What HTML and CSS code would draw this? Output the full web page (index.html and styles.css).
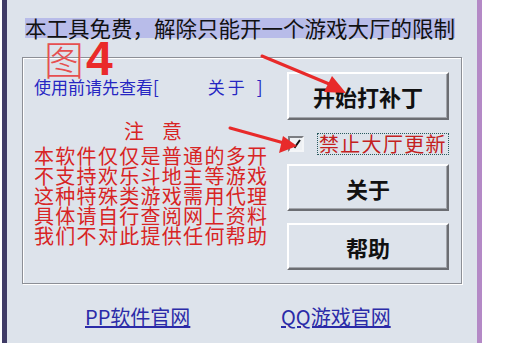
FILE: index.html
```html
<!DOCTYPE html>
<html lang="zh-CN">
<head>
<meta charset="utf-8">
<title>游戏大厅多开补丁</title>
<link rel="stylesheet" href="styles.css">
</head>
<body>
<div class="window">
  <div class="title"><span class="title-text">本工具免费，解除只能开一个游戏大厅的限制</span></div>
  <div class="group">
    <div class="left">
      <div class="hint">使用前请先查看[<span class="hint-about">关于</span>]</div>
      <div class="notice-head">注&nbsp;&nbsp;&nbsp;&nbsp;意</div>
      <div class="notice">
        <div class="notice-line">本软件仅仅是普通的多开</div>
        <div class="notice-line">不支持欢乐斗地主等游戏</div>
        <div class="notice-line">这种特殊类游戏需用代理</div>
        <div class="notice-line">具体请自行查阅网上资料</div>
        <div class="notice-line">我们不对此提供任何帮助</div>
      </div>
    </div>
    <div class="right">
      <div class="btn btn-main">开始打补丁</div>
      <div class="check-row">
        <span class="checkbox"><svg width="12" height="12" viewBox="0 0 12 12"><path d="M2 6 L5 9 L10 2" fill="none" stroke="#111" stroke-width="2"/></svg></span>
        <span class="check-label">禁止大厅更新</span>
      </div>
      <div class="btn btn-about">关于</div>
      <div class="btn btn-help">帮助</div>
    </div>
  </div>
  <div class="links">
    <a class="link" href="#">PP软件官网</a>
    <a class="link" href="#">QQ游戏官网</a>
  </div>
</div>
<div class="fig-label"><span class="fig-char">图</span><span class="fig-num">4</span></div>
<svg class="arrows" width="508" height="343" viewBox="0 0 508 343">
  <path d="M262 56 L334 86" stroke="#e82a2a" stroke-width="3" fill="none" stroke-linecap="round"/>
  <path d="M346 93 L324 92 L332 76 Z" fill="#e82a2a"/>
  <path d="M230 128 L284 143" stroke="#e82a2a" stroke-width="3" fill="none" stroke-linecap="round"/>
  <path d="M297 146 L279 153 L283 136 Z" fill="#e82a2a"/>
</svg>
</body>
</html>
```

FILE: styles.css
```css
html, body {
  margin: 0;
  padding: 0;
  background: #ffffff;
}
body {
  position: relative;
  width: 508px;
  height: 343px;
  overflow: hidden;
  font-family: "Noto Sans CJK SC", "Liberation Sans", sans-serif;
}
.window {
  margin-left: 2px;
  width: 470px;
  height: 343px;
  background: #dde3eb;
  border-left: 5px solid #3f3b66;
  border-right: 5px solid #b489c6;
  box-sizing: content-box;
  overflow: hidden;
}
.title {
  padding-top: 18px;
  padding-left: 18px;
  height: 20px;
}
.title-text {
  display: inline-block;
  height: 20px;
  line-height: 20px;
  font-size: 21.5px;
  color: #111;
  background: #b8bce9;
  white-space: nowrap;
}
.group {
  margin-top: 19px;
  margin-left: 15px;
  width: 438px;
  height: 225px;
  border: 1px solid #8c8f96;
  box-shadow: 1px 1px 0 #ffffff, inset 1px 1px 0 #ffffff;
  display: flex;
}
.left {
  width: 253px;
  padding-left: 11px;
  padding-top: 19px;
}
.hint {
  font-size: 17px;
  line-height: 20px;
  height: 20px;
  color: #2626c2;
  white-space: nowrap;
}
.hint-about {
  margin-left: 49px;
  margin-right: 9px;
  letter-spacing: 3px;
}
.notice-head {
  margin-top: 24px;
  font-size: 20px;
  line-height: 20px;
  height: 20px;
  color: #d82424;
  text-align: center;
  width: 238px;
}
.notice {
  margin-top: 5px;
}
.notice-line {
  font-size: 20px;
  line-height: 20px;
  height: 20px;
  letter-spacing: 1.3px;
  color: #d82424;
  white-space: nowrap;
}
.right {
  padding-top: 14px;
  display: flex;
  flex-direction: column;
}
.btn {
  width: 162px;
  height: 47px;
  box-sizing: border-box;
  border: 2px solid;
  border-color: #ffffff #6b6d72 #6b6d72 #ffffff;
  box-shadow: inset -1px -1px 0 #a3a6ac;
  background: #dde3eb;
  display: flex;
  align-items: center;
  justify-content: center;
  font-size: 22px;
  font-weight: bold;
  color: #111;
}
.btn-main {
  height: 48px;
}
.check-row {
  margin-top: 13px;
  height: 21px;
  display: flex;
  align-items: center;
}
.checkbox {
  margin-left: 1px;
  width: 16px;
  height: 16px;
  box-sizing: border-box;
  border: 2px solid;
  border-color: #7b7d82 #f4f6f8 #f4f6f8 #7b7d82;
  background: #eef1f4;
  display: flex;
  align-items: center;
  justify-content: center;
}
.check-label {
  margin-left: 13px;
  height: 20px;
  line-height: 20px;
  padding: 0 1px;
  border: 1px dotted #2b5b5f;
  font-size: 20px;
  letter-spacing: 1.3px;
  color: #c42020;
  white-space: nowrap;
}
.btn-about {
  margin-top: 10px;
}
.btn-help {
  margin-top: 12px;
}
.links {
  margin-top: 22px;
  padding-left: 78px;
  display: flex;
}
.link {
  display: block;
  width: 197px;
  font-size: 20px;
  line-height: 22px;
  color: #2b2ba8;
  text-decoration: underline;
  white-space: nowrap;
}
.fig-label {
  position: absolute;
  left: 44px;
  top: 36px;
  height: 44px;
  line-height: 44px;
  color: #e83030;
  white-space: nowrap;
}
.fig-char {
  font-size: 40px;
  font-weight: 300;
  color: #e65050;
}
.fig-num {
  font-family: "Liberation Sans", sans-serif;
  font-size: 48px;
  font-weight: bold;
  color: #ea2a2a;
  margin-left: 2px;
}
.arrows {
  position: absolute;
  left: 0;
  top: 0;
  pointer-events: none;
}
```
